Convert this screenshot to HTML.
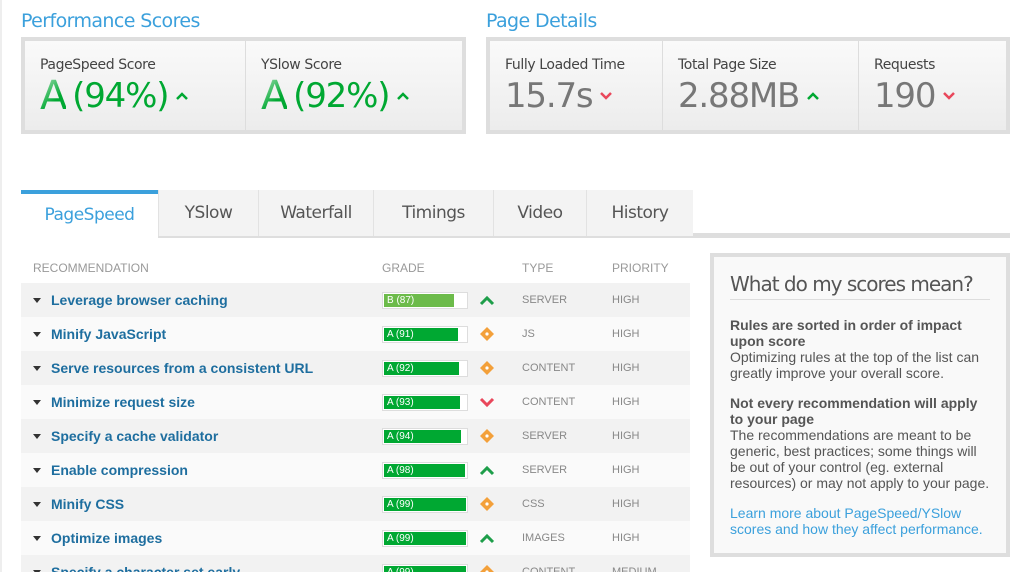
<!DOCTYPE html><html><head><style>
*{margin:0;padding:0;box-sizing:border-box}
html,body{width:1030px;height:572px;overflow:hidden}
body{background:#fff;font-family:"DejaVu Sans",sans-serif;position:relative}
.edge{position:absolute;left:0;top:0;width:2px;height:572px;background:#eee}
.h{position:absolute;color:#3ba0dc;font-size:19px;letter-spacing:-0.6px}
.box{position:absolute;border:4px solid #dedede;background:linear-gradient(#fafafa,#ececec);display:flex}
.cell{border-right:1px solid #ddd;padding:16px 0 0 15px}
.cell:last-child{border-right:0}
.lbl{font-size:14px;color:#444;letter-spacing:-0.4px}
.val{font-size:34px;color:#00a832;letter-spacing:-1.2px;line-height:40px;margin-top:3px;white-space:nowrap;display:flex;align-items:center}
.g{color:#777}
.A{font-size:40px;margin-right:6px;background:linear-gradient(135deg,#b5e6c2,#00a832 60%);-webkit-background-clip:text;color:transparent}
.val svg{margin-left:8px}
.tabs{position:absolute;top:190px;left:21px;display:flex;height:46px}
.tab{background:#f3f3f3;border-left:1px solid #e2e2e2;font-size:17px;color:#555;letter-spacing:-0.5px;display:flex;align-items:center;justify-content:center}
.tab.act{background:#fff;color:#3ba0dc;border-top:4px solid #3ba0dc;border-left:0}
table{position:absolute;left:21px;top:252px;width:669px;border-collapse:collapse;font-family:"Liberation Sans",sans-serif}
th{font-size:12px;color:#999;font-weight:normal;text-align:left;height:31px;vertical-align:middle}
td{height:34px;font-size:11px;color:#888;vertical-align:middle}
tr:nth-child(even) td{background:#f2f2f2}
tr:nth-child(odd) td{background:#fafafa}
td.n{font-size:14px;font-weight:bold;color:#1e6e9f}
.tri{display:inline-block;width:0;height:0;border-left:4px solid transparent;border-right:4px solid transparent;border-top:5px solid #333;margin:0 10px 2px 12px}
.bar{width:86px;height:17px;border:1px solid #ddd;background:#fff;position:relative}
.bar div{position:absolute;left:1px;top:1px;bottom:1px;background:#00a832;color:#fff;font-size:10px;padding-left:3px;line-height:14px}
.side{position:absolute;left:710px;top:253px;width:300px;height:304px;border:4px solid #dedede;background:#f9f9f9;padding:0 0 0 16px;font-family:"Liberation Sans",sans-serif;color:#555;font-size:14px;line-height:16px}
.side h2{font-family:"DejaVu Sans",sans-serif;font-weight:normal;font-size:20px;color:#555;letter-spacing:-1px;margin:19px 0 0 0;padding-bottom:7px;border-bottom:1px solid #ddd;width:260px;white-space:nowrap}
.side .t{width:262px}
.side b{display:block}
.side a{color:#3ba0dc}
</style></head><body>
<div class="edge"></div>
<div class="h" style="left:21px;top:10px">Performance Scores</div>
<div class="h" style="left:486px;top:10px">Page Details</div>
<div class="box" style="left:21px;top:37px;width:445px;height:97px">
 <div class="cell" style="width:221px"><div class="lbl">PageSpeed Score</div><div class="val"><span class="A">A</span>(94%)<svg width="12" height="8"><path d="M1 7L6 2L11 7" stroke="#00a832" stroke-width="2.5" fill="none"/></svg></div></div>
 <div class="cell"><div class="lbl">YSlow Score</div><div class="val"><span class="A">A</span>(92%)<svg width="12" height="8"><path d="M1 7L6 2L11 7" stroke="#00a832" stroke-width="2.5" fill="none"/></svg></div></div>
</div>
<div class="box" style="left:486px;top:37px;width:524px;height:97px">
 <div class="cell" style="width:173px"><div class="lbl">Fully Loaded Time</div><div class="val g">15.7s<svg width="12" height="8"><path d="M1 1L6 6L11 1" stroke="#e9475b" stroke-width="2.5" fill="none"/></svg></div></div>
 <div class="cell" style="width:196px"><div class="lbl">Total Page Size</div><div class="val g">2.88MB<svg width="12" height="8"><path d="M1 7L6 2L11 7" stroke="#00a832" stroke-width="2.5" fill="none"/></svg></div></div>
 <div class="cell"><div class="lbl">Requests</div><div class="val g">190<svg width="12" height="8"><path d="M1 1L6 6L11 1" stroke="#e9475b" stroke-width="2.5" fill="none"/></svg></div></div>
</div>
<div style="position:absolute;left:158px;top:233px;width:852px;height:5px;background:#dedede"></div>
<div class="tabs">
 <div class="tab act" style="width:137px">PageSpeed</div>
 <div class="tab" style="width:100px">YSlow</div>
 <div class="tab" style="width:115px">Waterfall</div>
 <div class="tab" style="width:120px">Timings</div>
 <div class="tab" style="width:93px">Video</div>
 <div class="tab" style="width:107px">History</div>
</div>
<table>
<tr><th style="width:361px;padding-left:12px">RECOMMENDATION</th><th style="width:140px">GRADE</th><th style="width:90px">TYPE</th><th>PRIORITY</th></tr>
<tr><td class="n"><span class="tri"></span>Leverage browser caching</td><td><div style="display:flex;align-items:center"><div class="bar"><div style="width:70px;background:#6cbb4a">B (87)</div></div><svg width="16" height="12" style="margin-left:11px"><path d="M2 10L8 4L14 10" stroke="#1e9e4a" stroke-width="3" fill="none"/></svg></div></td><td>SERVER</td><td>HIGH</td></tr>
<tr><td class="n"><span class="tri"></span>Minify JavaScript</td><td><div style="display:flex;align-items:center"><div class="bar"><div style="width:74px">A (91)</div></div><svg width="16" height="16" style="margin-left:11px"><path d="M8 1L15 8L8 15L1 8Z" fill="#f3a03a"/><circle cx="8" cy="8" r="1.6" fill="#fff"/></svg></div></td><td>JS</td><td>HIGH</td></tr>
<tr><td class="n"><span class="tri"></span>Serve resources from a consistent URL</td><td><div style="display:flex;align-items:center"><div class="bar"><div style="width:75px">A (92)</div></div><svg width="16" height="16" style="margin-left:11px"><path d="M8 1L15 8L8 15L1 8Z" fill="#f3a03a"/><circle cx="8" cy="8" r="1.6" fill="#fff"/></svg></div></td><td>CONTENT</td><td>HIGH</td></tr>
<tr><td class="n"><span class="tri"></span>Minimize request size</td><td><div style="display:flex;align-items:center"><div class="bar"><div style="width:76px">A (93)</div></div><svg width="16" height="12" style="margin-left:11px"><path d="M2 3L8 9L14 3" stroke="#e9475b" stroke-width="3" fill="none"/></svg></div></td><td>CONTENT</td><td>HIGH</td></tr>
<tr><td class="n"><span class="tri"></span>Specify a cache validator</td><td><div style="display:flex;align-items:center"><div class="bar"><div style="width:77px">A (94)</div></div><svg width="16" height="16" style="margin-left:11px"><path d="M8 1L15 8L8 15L1 8Z" fill="#f3a03a"/><circle cx="8" cy="8" r="1.6" fill="#fff"/></svg></div></td><td>SERVER</td><td>HIGH</td></tr>
<tr><td class="n"><span class="tri"></span>Enable compression</td><td><div style="display:flex;align-items:center"><div class="bar"><div style="width:81px">A (98)</div></div><svg width="16" height="12" style="margin-left:11px"><path d="M2 10L8 4L14 10" stroke="#1e9e4a" stroke-width="3" fill="none"/></svg></div></td><td>SERVER</td><td>HIGH</td></tr>
<tr><td class="n"><span class="tri"></span>Minify CSS</td><td><div style="display:flex;align-items:center"><div class="bar"><div style="width:82px">A (99)</div></div><svg width="16" height="16" style="margin-left:11px"><path d="M8 1L15 8L8 15L1 8Z" fill="#f3a03a"/><circle cx="8" cy="8" r="1.6" fill="#fff"/></svg></div></td><td>CSS</td><td>HIGH</td></tr>
<tr><td class="n"><span class="tri"></span>Optimize images</td><td><div style="display:flex;align-items:center"><div class="bar"><div style="width:82px">A (99)</div></div><svg width="16" height="12" style="margin-left:11px"><path d="M2 10L8 4L14 10" stroke="#1e9e4a" stroke-width="3" fill="none"/></svg></div></td><td>IMAGES</td><td>HIGH</td></tr>
<tr><td class="n"><span class="tri"></span>Specify a character set early</td><td><div style="display:flex;align-items:center"><div class="bar"><div style="width:82px">A (99)</div></div><svg width="16" height="16" style="margin-left:11px"><path d="M8 1L15 8L8 15L1 8Z" fill="#f3a03a"/><circle cx="8" cy="8" r="1.6" fill="#fff"/></svg></div></td><td>CONTENT</td><td>MEDIUM</td></tr>
</table>
<div class="side">
<h2>What do my scores mean?</h2>
<div class="t" style="margin-top:17px"><b>Rules are sorted in order of impact upon score</b>Optimizing rules at the top of the list can greatly improve your overall score.</div>
<div class="t" style="margin-top:14px"><b>Not every recommendation will apply to your page</b>The recommendations are meant to be generic, best practices; some things will be out of your control (eg. external resources) or may not apply to your page.</div>
<div class="t" style="margin-top:14px"><a>Learn more about PageSpeed/YSlow scores and how they affect performance.</a></div>
</div>
</body></html>
